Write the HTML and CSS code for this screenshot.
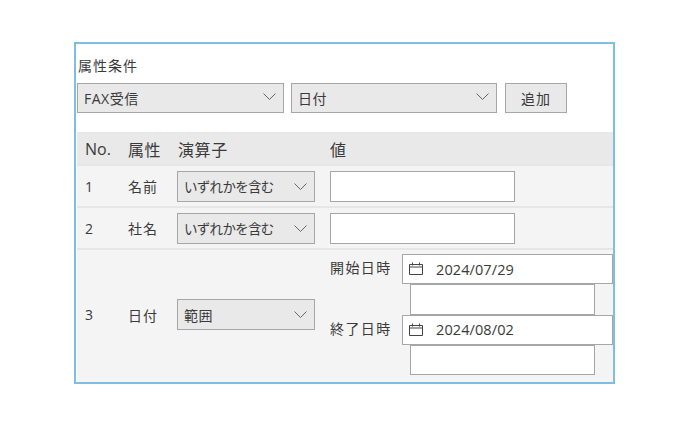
FILE: index.html
```html
<!DOCTYPE html>
<html lang="ja">
<head>
<meta charset="utf-8">
<title>属性条件</title>
<link rel="stylesheet" href="styles.css">
</head>
<body>
<section class="panel">
  <div class="cond-label">属性条件</div>
  <div class="cond-bar">
    <div class="select w-207"><span>FAX受信</span><svg class="chev" viewBox="0 0 13 7"><path d="M.5 .5l6 6 6-6"/></svg></div>
    <div class="select w-206"><span>日付</span><svg class="chev" viewBox="0 0 13 7"><path d="M.5 .5l6 6 6-6"/></svg></div>
    <div class="btn">追加</div>
  </div>
  <div class="table">
    <div class="row head">
      <div class="c-no">No.</div><div class="c-attr">属性</div><div class="c-op">演算子</div><div class="c-val">値</div>
    </div>
    <div class="row">
      <div class="c-no">1</div><div class="c-attr">名前</div>
      <div class="c-op"><div class="select sm"><span class="kana">いずれかを含む</span><svg class="chev" viewBox="0 0 13 7"><path d="M.5 .5l6 6 6-6"/></svg></div></div>
      <div class="c-val"><div class="input"></div></div>
    </div>
    <div class="row">
      <div class="c-no">2</div><div class="c-attr">社名</div>
      <div class="c-op"><div class="select sm"><span class="kana">いずれかを含む</span><svg class="chev" viewBox="0 0 13 7"><path d="M.5 .5l6 6 6-6"/></svg></div></div>
      <div class="c-val"><div class="input"></div></div>
    </div>
    <div class="row last">
      <div class="c-no">3</div><div class="c-attr">日付</div>
      <div class="c-op"><div class="select sm"><span>範囲</span><svg class="chev" viewBox="0 0 13 7"><path d="M.5 .5l6 6 6-6"/></svg></div></div>
      <div class="c-val range">
        <div class="date-row">
          <span class="date-label">開始日時</span>
          <div class="date"><svg class="cal" viewBox="0 0 14 14"><path d="M.5 2.5h13v10H.5zM.5 5h13M3.5.5v3M10.5.5v3"/></svg><span>2024/07/29</span></div>
        </div>
        <div class="input time"></div>
        <div class="date-row">
          <span class="date-label">終了日時</span>
          <div class="date"><svg class="cal" viewBox="0 0 14 14"><path d="M.5 2.5h13v10H.5zM.5 5h13M3.5.5v3M10.5.5v3"/></svg><span>2024/08/02</span></div>
        </div>
        <div class="input time"></div>
      </div>
    </div>
  </div>
</section>
</body>
</html>
```

FILE: styles.css
```css
* { box-sizing: border-box; }
html, body { margin: 0; background: #fff; }
body {
  padding: 42px 0 0 74px;
  font-family: "Open Sans", "Noto Sans CJK JP", sans-serif;
  font-size: 14px;
  color: #3a3a3a;
}
.panel {
  width: 541px;
  height: 342px;
  border: 2px solid #7fbde6;
  padding-left: 1px;
  background: #fff;
  display: flex;
  flex-direction: column;
}
.cond-label {
  height: 39px;
  padding: 11px 0 0 1px;
  font-size: 14px;
  letter-spacing: 1px;
  line-height: 22px;
}
.cond-bar { display: flex; align-items: stretch; height: 30px; letter-spacing: 0.5px; }
.select {
  display: flex;
  align-items: center;
  justify-content: space-between;
  height: 30px;
  border: 1px solid #a6a6a6;
  background: #e9e9e9;
  padding: 0 7px 0 6px;
}
.w-207 { width: 207px; margin-right: 7px; }
.w-206 { width: 206px; margin-right: 8px; }
.chev { width: 13px; height: 7px; fill: none; stroke: #666; stroke-width: 1; margin-bottom: 4px; }
.btn {
  width: 62px;
  border: 1px solid #a6a6a6;
  background: #e9e9e9;
  display: flex;
  align-items: center;
  justify-content: center;
  letter-spacing: 1px;
}
.table { margin-top: 19px; flex: 1; background: #f4f4f4; display: flex; flex-direction: column; }
.row { display: flex; align-items: center; height: 42px; border-bottom: 2px solid #e6e6e6; }
.row.head {
  height: 34px;
  background: #e9e9e9;
  font-size: 16px;
  padding-top: 1px;
}
.row.last { flex: 1; border-bottom: 0; padding-bottom: 3px; }
.c-no { width: 51px; padding-left: 8px; }
.c-attr { width: 49px; letter-spacing: 1px; }
.c-op { width: 153px; }
.head .c-attr { letter-spacing: 0.6px; }
.head .c-op { padding-left: 1px; letter-spacing: 0.6px; }
.c-val { flex: 1; }
.sm { width: 138px; height: 31px; letter-spacing: 0.5px; }
.sm .chev { margin-bottom: 0; }
.kana { font-size: 13.5px; letter-spacing: -0.7px; }
.input {
  width: 185px;
  height: 31px;
  background: #fff;
  border: 1px solid #a6a6a6;
}
.range { align-self: flex-start; padding-top: 4px; display: flex; flex-direction: column; }
.date-row { display: flex; align-items: flex-start; }
.date-label { width: 72px; line-height: 27px; letter-spacing: 1.4px; }
.date {
  width: 211px;
  height: 30px;
  background: #fff;
  border: 1px solid #a6a6a6;
  display: flex;
  align-items: center;
  padding-left: 6px;
  font-size: 14.5px;
  letter-spacing: 0.1px;
}
.cal { width: 14px; height: 14px; fill: none; stroke: #444; stroke-width: 1; margin-right: 13px; flex: none; }
.input.time { margin-left: 80px; height: 30.5px; }
```
